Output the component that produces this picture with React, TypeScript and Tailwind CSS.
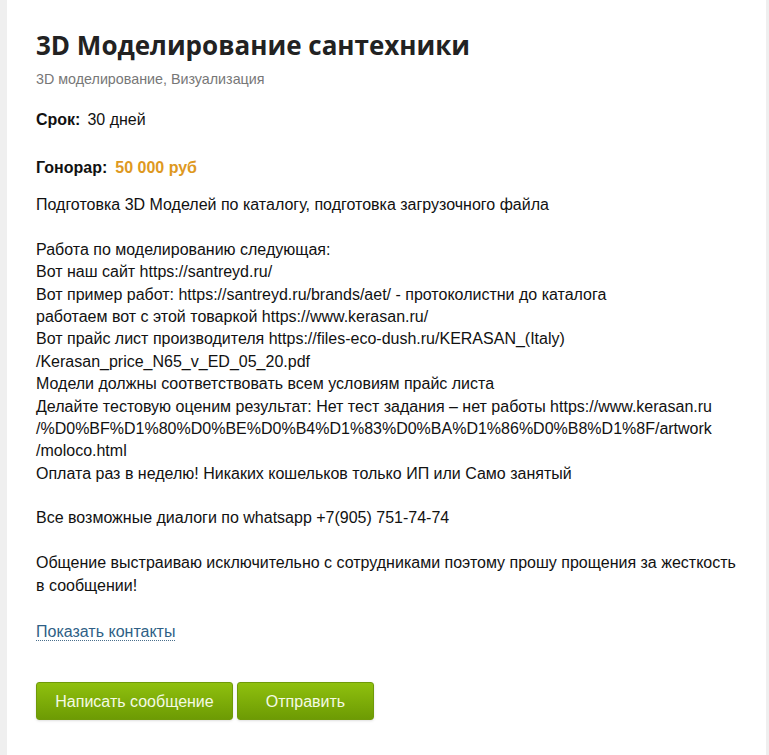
import React from "react";

const lines: string[] = [
  "Подготовка 3D Моделей по каталогу, подготовка загрузочного файла",
  "",
  "Работа по моделированию следующая:",
  "Вот наш сайт https://santreyd.ru/",
  "Вот пример работ: https://santreyd.ru/brands/aet/ - протоколистни до каталога",
  "работаем вот с этой товаркой https://www.kerasan.ru/",
  "Вот прайс лист производителя https://files-eco-dush.ru/KERASAN_(Italy)",
  "/Kerasan_price_N65_v_ED_05_20.pdf",
  "Модели должны соответствовать всем условиям прайс листа",
  "Делайте тестовую оценим результат: Нет тест задания – нет работы https://www.kerasan.ru",
  "/%D0%BF%D1%80%D0%BE%D0%B4%D1%83%D0%BA%D1%86%D0%B8%D1%8F/artwork",
  "/moloco.html",
  "Оплата раз в неделю! Никаких кошельков только ИП или Само занятый",
  "",
  "Все возможные диалоги по whatsapp +7(905) 751-74-74",
  "",
  "Общение выстраиваю исключительно с сотрудниками поэтому прошу прощения за жесткость",
  "в сообщении!",
];

const App = () => {
  return (
    <div className="min-h-screen bg-[#efefef] pl-[7px] pr-[3px]">
      <div className="min-h-[755px] bg-white pl-[29px] pr-4 pt-[29px] font-['Liberation_Sans',Arial,sans-serif] text-[#111]">
        <h1 className="font-['Open_Sans',sans-serif] text-[26px] font-bold leading-[32px] text-[#222]">
          3D Моделирование сантехники
        </h1>
        <div className="mt-[8px] text-[14.3px] leading-[20px] text-[#777]">
          3D моделирование, Визуализация
        </div>

        <div className="mt-[20px] text-[16px] leading-[22px]">
          <span className="mr-[7px] font-bold">Срок:</span>
          <span>30 дней</span>
        </div>

        <div className="mt-[26px] text-[16px] leading-[22px]">
          <span className="mr-[8px] font-bold">Гонорар:</span>
          <span className="font-bold text-[#de991f]">50 000 руб</span>
        </div>

        <div className="mt-[15px] text-[16px] leading-[1.4]">
          {lines.map((line, i) => (
            <div key={i} className="whitespace-nowrap">
              {line === "" ? "\u00a0" : line}
            </div>
          ))}
        </div>

        <div className="mt-[24px] text-[16px] leading-[22px]">
          <span className="cursor-pointer border-b border-dotted border-[#4a6f8c] text-[#2f5f86]">
            Показать контакты
          </span>
        </div>

        <div className="mt-[39px] flex gap-[4px]">
          <button className="h-[38px] w-[197px] rounded-[3px] border border-[#6f9a08] bg-gradient-to-b from-[#8fc00e] to-[#6d9b04] pt-[2px] text-[16px] text-[#f4fae4] shadow-sm">
            Написать сообщение
          </button>
          <button className="h-[38px] w-[137px] rounded-[3px] border border-[#6f9a08] bg-gradient-to-b from-[#8fc00e] to-[#6d9b04] pt-[2px] text-[16px] text-[#f4fae4] shadow-sm">
            Отправить
          </button>
        </div>
      </div>
    </div>
  );
};

export default App;
